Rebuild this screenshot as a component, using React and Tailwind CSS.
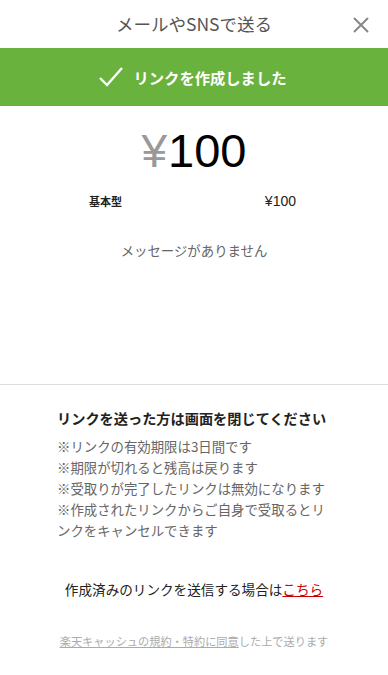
import React from 'react';

const notes = [
  '※リンクの有効期限は3日間です',
  '※期限が切れると残高は戻ります',
  '※受取りが完了したリンクは無効になります',
  '※作成されたリンクからご自身で受取るとリンクをキャンセルできます',
];

const App = () => {
  return (
    <div
      className="w-[388px] h-[675px] bg-white overflow-hidden flex flex-col"
      style={{ fontFamily: '"Noto Sans CJK JP", "Noto Sans", sans-serif' }}
    >
      {/* ヘッダー */}
      <div className="relative h-[48px] flex items-center justify-center">
        <span className="text-[17.5px] text-[#555]">メールやSNSで送る</span>
        <svg className="absolute right-[18px] top-[16px]" width="18" height="18" viewBox="0 0 18 18">
          <path d="M2 2 L16 16 M16 2 L2 16" stroke="#888" strokeWidth="2" />
        </svg>
      </div>

      {/* 完了バナー */}
      <div className="h-[58px] bg-[#6ab23e] flex items-center justify-center gap-[10px]">
        <svg width="26" height="22" viewBox="0 0 26 22" className="-ml-[4px]">
          <path d="M2 12 L9 19 L24 2" fill="none" stroke="#fff" strokeWidth="2.4" />
        </svg>
        <span className="text-[15.3px] font-bold text-white">リンクを作成しました</span>
      </div>

      {/* 金額 */}
      <div className="flex justify-center items-baseline mt-[14px] h-[62px] leading-none">
        <span
          className="text-[46px] text-[#999] mt-[8px]"
          style={{ fontFamily: '"Liberation Sans", sans-serif' }}
        >
          ¥
        </span>
        <span
          className="text-[47px] text-black ml-[1px]"
          style={{ fontFamily: '"Liberation Sans", sans-serif' }}
        >
          100
        </span>
      </div>

      <div className="flex justify-between items-center pl-[89px] pr-[92px] mt-[9px]">
        <span className="text-[11px] font-bold text-[#222]">基本型</span>
        <span className="text-[14px] text-[#222]" style={{ fontFamily: '"Liberation Sans", sans-serif' }}>
          ¥100
        </span>
      </div>

      <div className="text-center text-[13.4px] text-[#666] mt-[28px]">メッセージがありません</div>

      <div className="border-t border-[#ddd] mt-[124px]" />

      {/* 注意事項 */}
      <div className="px-[57px] pt-[23px]">
        <div className="text-[14.2px] font-bold text-[#222]">リンクを送った方は画面を閉じてください</div>
        <ul className="mt-[7px] text-[13.4px] text-[#666] leading-[21px]">
          {notes.map((n) => (
            <li key={n}>{n}</li>
          ))}
        </ul>
      </div>

      <div className="text-center text-[13.6px] text-[#222] mt-[38px]">
        作成済みのリンクを送信する場合は
        <span className="text-[#c00] underline">こちら</span>
      </div>

      <div className="text-center text-[11.2px] text-[#aaa] mt-[33px]">
        <span className="underline">楽天キャッシュの規約・特約に同意</span>した上で送ります
      </div>
    </div>
  );
};

export default App;
